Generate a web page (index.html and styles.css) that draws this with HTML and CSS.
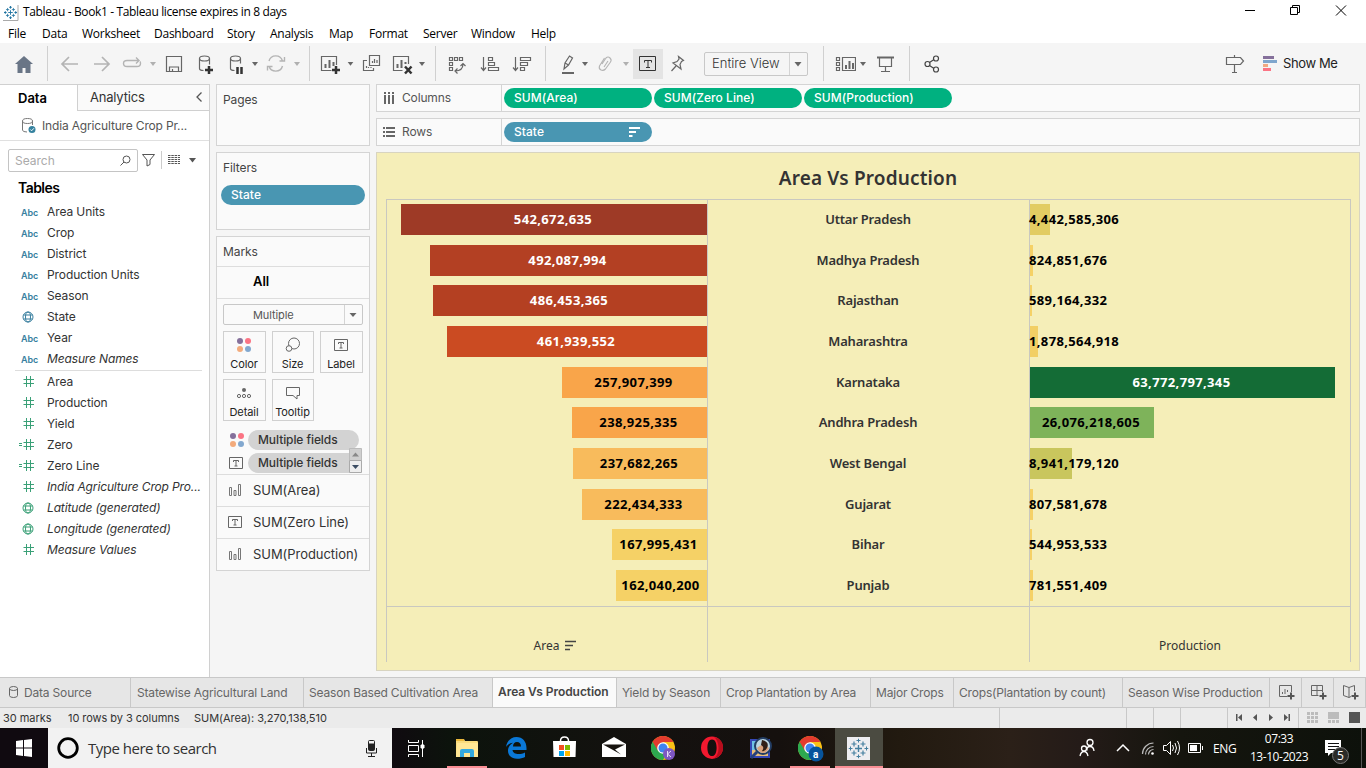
FILE: index.html
```html
<!DOCTYPE html>
<html lang="en">
<head>
<meta charset="utf-8">
<title>Tableau - Book1</title>
<link rel="stylesheet" href="styles.css">
</head>
<body>
<svg class="defs" width="0" height="0">
  <symbol id="caret" viewBox="0 0 14 41"><path d="M4 19h6l-3 4z"/></symbol>
  <symbol id="globe" viewBox="0 0 12 12"><g fill="none" stroke="currentColor"><circle cx="6" cy="6" r="5"/><ellipse cx="6" cy="6" rx="2.5" ry="5"/><path d="M1.6 4h8.8M1.6 8h8.8"/></g></symbol>
  <symbol id="hash" viewBox="0 0 15 11"><path d="M7.500 0v11M11.500 0v11M4.500 3.500H15M4.500 7.500H15" fill="none" stroke="currentColor"/></symbol>
  <symbol id="calc" viewBox="0 0 15 11"><path d="M7.500 0v11M11.500 0v11M4.500 3.500H15M4.500 7.500H15M0 4.500h3M0 6.500h3" fill="none" stroke="currentColor"/></symbol>
  <symbol id="dots" viewBox="0 0 16 16"><circle cx="4" cy="4" r="3" fill="#85709b"/><circle cx="12" cy="4" r="3" fill="#fb7484"/><circle cx="4" cy="12" r="3" fill="#f3ab7c"/><circle cx="12" cy="12" r="3" fill="#82a8cf"/></symbol>
  <symbol id="tbox" viewBox="0 0 14 12"><path d="M.5.5h13v11H.5zM4.500 5V3.500h5V5M7 3.500v5.500M5.500 9h3" fill="none" stroke="#666"/></symbol>
  <symbol id="bars" viewBox="0 0 14 12"><path d="M1.500 3.500h2v8h-2zM6 6.500h2v5H6zM10.500.5h2v11h-2z" fill="none" stroke="#777"/></symbol>
  <symbol id="chrome" viewBox="0 0 24 24"><circle cx="12" cy="12" r="12" fill="#fbc116"/><path d="M1.600 6A12 12 0 0 0 12 24l5.200-9L12 12 6.800 15z" fill="#2da94f"/><path d="M1.600 6 6.800 15 12 7z" fill="#2da94f"/><path d="M1.600 6A12 12 0 0 1 22.400 6H12L6.500 9z" fill="#e33b2e"/><path d="M1.600 6 6.800 15 12 6z" fill="#e33b2e"/><path d="M1.600 6A12 12 0 0 0 4 20.900L7 15z" fill="#2da94f"/><circle cx="12" cy="12" r="5.800" fill="#fff"/><circle cx="12" cy="12" r="4.500" fill="#3f83f0"/></symbol>
  <symbol id="tableau" viewBox="0 0 20 20"><g fill="none" stroke="currentColor"><path d="M10 6.500v7M6.500 10h7" stroke-width="1.400"/><path d="M10 0v4M8 2h4M10 16v4M8 18h4M0 10h4M2 8v4M16 10h4M18 8v4"/><path d="M5.500 3v5M3 5.500h5M14.500 3v5M12 5.500h5M5.500 12v5M3 14.500h5M14.500 12v5M12 14.500h5" stroke-width="1.200"/></g></symbol>
</svg>

<header class="titlebar">
  <svg class="app" width="16" height="19"><path d="M0 3h15v15H0z" fill="#fff"/><path d="M15 3v15.500H0" fill="none" stroke="#aaa"/><use href="#tableau" x="1" y="4" width="13" height="13" class="tabico"/></svg>
  <span class="caption">Tableau - Book1 - Tableau license expires in 8 days</span>
  <svg class="winctl" width="120" height="22" viewBox="1240 0 120 22" fill="none" stroke="#000"><path d="M1245 10.500h10M1290.500 7.500h7v7h-7zM1292.500 7.500v-2h7v7h-2M1336 5.500l10 10M1346 5.500l-10 10"/></svg>
</header>

<nav class="menu">
  <span style="width:34px">File</span><span style="width:40px">Data</span><span style="width:72px">Worksheet</span><span style="width:73px">Dashboard</span><span style="width:43px">Story</span><span style="width:59px">Analysis</span><span style="width:40px">Map</span><span style="width:54px">Format</span><span style="width:48px">Server</span><span style="width:60px">Window</span><span>Help</span>
</nav>

<div class="toolbar">
  <svg width="47" viewBox="0 43 47 41"><path d="M24 56l9 8h-2.500v9h-5v-5h-3v5h-5v-9H15z" fill="#697586"/></svg><i class="sep"></i>
  <svg width="38" viewBox="48 43 38 41" class="dim"><path d="M62 64h16M69 57l-7 7 7 7"/></svg>
  <svg width="30" viewBox="86 43 30 41" class="dim"><path d="M94 64h15M102 57l7 7-7 7"/></svg>
  <svg width="30" viewBox="116 43 30 41" class="dim round"><path d="M139 60.500h-12q-3.500 0-3.500 3t3.500 3h10q3.500 0 3.500-3 0-1.500-.5-2M136 57.500l3 3-3 3"/></svg>
  <svg width="14" class="caret dimc"><use href="#caret" width="14" height="41"/></svg>
  <svg width="28" viewBox="160 43 28 41" class="ln"><path d="M166.500 56.500h15v15h-15zM169.500 71v-4h9v4M172.500 71v-2"/></svg>
  <svg width="32" viewBox="188 43 32 41" class="ln"><ellipse cx="204.500" cy="58.500" rx="5" ry="2.500"/><path d="M199.500 58.500v10c0 1 1.500 2 4 2M209.500 58.500v6"/><path d="M209 66v8M205 70h8" class="bold"/></svg>
  <svg width="28" viewBox="220 43 28 41" class="ln"><ellipse cx="235.500" cy="58.500" rx="5" ry="2.500"/><path d="M230.500 58.500v10c0 1 1.500 2 4 2M240.500 58.500v5"/><path d="M237.500 67v7M241.500 67v7" class="bold"/></svg>
  <svg width="14" class="caret"><use href="#caret" width="14" height="41"/></svg>
  <svg width="28" viewBox="262 43 28 41" class="dim round"><path d="M269 61a7 7 0 0 1 13.500 0M282.500 66a7 7 0 0 1-13.500 0M279.500 61h5v-4M272.500 66.500h-5v4"/></svg>
  <svg width="14" class="caret dimc"><use href="#caret" width="14" height="41"/></svg><b class="gap5"></b><i class="sep"></i>
  <svg width="34" viewBox="310 43 34 41" class="ln"><path d="M336.500 65v-8.500h-15v14h10"/><path d="M325.500 68v-4M329.500 68v-8M333.500 66v-4" class="mid"/><path d="M336 66v8M332 70h8" class="bold"/></svg>
  <svg width="13" class="caret"><use href="#caret" width="13" height="41"/></svg>
  <svg width="31" viewBox="357 43 31 41" class="ln"><path d="M369.500 55.500h10v10h-10zM367 60.500h-3.500v10h10V68M372.500 63v-2M374.500 63v-4M377 63v-3M366.500 68v-2M368.500 68v-1M371 68v-1"/></svg>
  <svg width="27" viewBox="388 43 27 41" class="ln"><path d="M408.500 64v-7.500h-15v14h9"/><path d="M397.500 68v-4M401.500 68v-8M405.500 64v-2" class="mid"/><path d="M405 66.500l6.500 7M411.500 66.500l-6.500 7" class="bold"/></svg>
  <svg width="14" class="caret"><use href="#caret" width="14" height="41"/></svg><b class="gap6"></b><i class="sep"></i>
  <svg width="36" viewBox="436 43 36 41" class="ln"><path d="M449.500 57.500h3v3h-3zM454.500 57.500h3v3h-3zM459.500 57.500h3v3h-3zM449.500 62.500h3v3h-3zM449.500 67.500h3v3h-3zM455 71c5 0 8-2 8-7M460.500 66l2.500-2.500 2.500 2.500M457.500 68.500L455 71l2.500 2.500"/></svg>
  <svg width="33" viewBox="472 43 33 41" class="ln"><path d="M483.500 57v13M481 67.500l2.500 3 2.500-3M488.500 57.500h4v3h-4zM488.500 62.500h6v3h-6zM488.500 67.500h10v3h-10z"/></svg>
  <svg width="40" viewBox="505 43 40 41" class="ln"><path d="M515.500 57v13M513 67.500l2.500 3 2.500-3M520.500 57.500h10v3h-10zM520.500 62.500h7v3h-7zM520.500 67.500h4v3h-4z"/></svg><i class="sep"></i>
  <svg width="32" viewBox="546 43 32 41" class="ln"><path d="M564 69l1-6 4.500-7 3 2-4 7zM565 63l3.500 2"/><path d="M562 73h12" class="mid"/></svg>
  <svg width="14" class="caret"><use href="#caret" width="14" height="41"/></svg>
  <svg width="27" viewBox="592 43 27 41" class="dim thin"><path d="M602 64l4-6q2-2 4 0t.5 4l-5 7q-2 2-4.500 1t-1.500-4l5-8M604 67l4-6"/></svg>
  <svg width="14" class="caret dimc"><use href="#caret" width="14" height="41"/></svg>
  <svg width="30" viewBox="633 43 30 41"><path d="M633 49h30v30h-30z" fill="#e4e4e4"/><path d="M639.500 56.500h16v14h-16zM644.500 62.500v-2h7v2M648 60.500v7M646 67.500h4" fill="none" stroke="#333"/></svg>
  <svg width="41" viewBox="663 43 41 41" class="ln"><path d="M678.500 56.500l5 4-2 1-1.500 3 1 4.500-8-6 4-1.500 2-2.500zM676 66l-4.500 5"/></svg>
  <div class="viewbox"><span>Entire View</span><svg width="18" height="22"><path d="M.5 0v22" stroke="#d4d4d4"/><path d="M5.500 9h7L9 13.500z" fill="#666"/></svg></div>
  <b class="gap15"></b><i class="sep"></i>
  <svg width="32" viewBox="824 43 32 41" class="ln"><path d="M836.500 57.500h3v3h-3zM836.500 62.500h3v3h-3zM836.500 67.500h3v3h-3zM842.500 57.500h13v13h-13z"/><path d="M846 69v-4M849.500 69v-8M853 69v-6" class="mid"/></svg>
  <svg width="14" class="caret"><use href="#caret" width="14" height="41"/></svg>
  <svg width="39" viewBox="870 43 39 41" class="ln"><path d="M877 57.500h17" class="mid"/><path d="M879.500 58v8.500h12V58M885.500 67v4M881 71.500h9"/></svg><i class="sep"></i>
  <svg width="40" viewBox="910 43 40 41" class="ln dark"><circle cx="927.500" cy="64" r="2.500"/><circle cx="936" cy="58.500" r="2.500"/><circle cx="936" cy="69.500" r="2.500"/><path d="M929.500 62.500l4.500-3M929.500 65.500l4.500 3"/></svg>
  <b class="fill"></b>
  <svg width="52" viewBox="1210 43 52 41" class="ln"><path d="M1226.500 57.500h14l3 3.500-3 3.500h-14zM1234.500 55v2M1234.500 65v7.500M1232 72.500h5"/></svg>
  <svg width="16" viewBox="1262 43 16 41"><path d="M1263 56h11v3h-11z" fill="#85709b"/><path d="M1263 60h14v3h-14z" fill="#7fa6cd"/><path d="M1263 64h5v3h-5z" fill="#f0a982"/><path d="M1263 68h8v3h-8z" fill="#fb7484"/></svg>
  <span class="showme">Show Me</span>
</div>

<main class="work">
  <aside class="data">
    <div class="dtabs"><strong>Data</strong><span>Analytics</span><svg width="8" height="12"><path d="M6.500 1.500 2 6l4.500 4.500" fill="none" stroke="#555" stroke-width="1.300"/></svg></div>
    <div class="source"><svg width="15" height="16" fill="none" stroke="#777"><ellipse cx="5.500" cy="3" rx="5" ry="2.500"/><path d="M.5 3v9q0 2 4.500 2M10.500 3v4"/><circle cx="10" cy="11.500" r="3.500" fill="#35829f" stroke="none"/><path d="M8.300 11.500l1.300 1.300 2.300-2.500" stroke="#fff"/></svg><span>India Agriculture Crop Pr...</span></div>
    <div class="find">
      <div class="search"><span>Search</span><svg width="11" height="11" fill="none" stroke="#555"><circle cx="6.500" cy="4.500" r="3.500"/><path d="M4 7L.5 10.500"/></svg></div>
      <svg width="58" height="22" viewBox="139 149 58 22" fill="none" stroke="#555"><path d="M142.500 154.500h12l-4.500 5.500v4.500l-3 1.500v-6z"/><path d="M161.500 151v18" stroke="#ccc"/><path d="M168 155.500h12M168 157.500h12M168 159.500h12M168 161.500h12M168 163.500h12" stroke-dasharray="2.500 .8"/><path d="M189 158h7l-3.500 4.500z" fill="#555" stroke="none"/></svg>
    </div>
    <h3>Tables</h3>
    <ul class="fields dims">
      <li><b>Abc</b>Area Units</li><li><b>Abc</b>Crop</li><li><b>Abc</b>District</li><li><b>Abc</b>Production Units</li><li><b>Abc</b>Season</li>
      <li><svg class="g"><use href="#globe"/></svg>State</li><li><b>Abc</b>Year</li><li><b>Abc</b><em>Measure Names</em></li>
    </ul>
    <ul class="fields meas">
      <li><svg class="h"><use href="#hash"/></svg>Area</li>
      <li><svg class="h"><use href="#hash"/></svg>Production</li>
      <li><svg class="h"><use href="#hash"/></svg>Yield</li>
      <li><svg class="h"><use href="#calc"/></svg>Zero</li>
      <li><svg class="h"><use href="#calc"/></svg>Zero Line</li>
      <li><svg class="h"><use href="#hash"/></svg><em>India Agriculture Crop Pro...</em></li>
      <li><svg class="g"><use href="#globe"/></svg><em>Latitude (generated)</em></li>
      <li><svg class="g"><use href="#globe"/></svg><em>Longitude (generated)</em></li>
      <li><svg class="h"><use href="#hash"/></svg><em>Measure Values</em></li>
    </ul>
  </aside>

  <section class="cards">
    <div class="card pages"><h4>Pages</h4></div>
    <div class="card filters"><h4>Filters</h4><span class="pill blue">State</span></div>
    <div class="card marks">
      <h4>Marks</h4>
      <div class="all">All</div>
      <div class="combo"><span>Multiple</span><svg width="18" height="19"><path d="M.5 0v19" stroke="#d4d4d4"/><path d="M5.500 8h7L9 12z" fill="#666"/></svg></div>
      <div class="btns">
        <div><svg width="16" height="16"><use href="#dots"/></svg>Color</div>
        <div><svg width="16" height="16" fill="none" stroke="#666"><circle cx="9" cy="6.500" r="5.500"/><circle cx="4" cy="11.500" r="2.800" fill="#fafafa"/></svg>Size</div>
        <div><svg width="16" height="16"><use href="#tbox" x="1" y="2" width="14" height="12"/></svg>Label</div>
        <div><svg width="16" height="16" fill="none" stroke="#666"><circle cx="8" cy="5" r="2" fill="#666" stroke="none"/><circle cx="3" cy="11" r="1.600"/><circle cx="8" cy="11" r="1.600"/><circle cx="13" cy="11" r="1.600"/></svg>Detail</div>
        <div><svg width="16" height="16" fill="none" stroke="#666"><path d="M1.500 2.500h13v8H12v3.500l-4-3.500H1.500z"/></svg>Tooltip</div>
      </div>
      <div class="enc">
        <div><svg width="16" height="16"><use href="#dots"/></svg><span>Multiple fields</span></div>
        <div><svg width="16" height="16"><use href="#tbox" x="0" y="2" width="14" height="12"/></svg><span>Multiple fields</span></div>
        <svg class="scroll" width="13" height="25"><path d="M.5.5h12v12H.5z" fill="#cfcfcf" stroke="#bbb"/><path d="M.5 12.500h12v12H.5z" fill="#eee" stroke="#aaa"/><path d="M3 8.500h7l-3.500-4z" fill="#888"/><path d="M3 17h7l-3.500 4z" fill="#3c4d63"/></svg>
      </div>
      <div class="mrow"><svg width="14" height="12"><use href="#bars"/></svg>SUM(Area)</div>
      <div class="mrow"><svg width="14" height="12"><use href="#tbox"/></svg>SUM(Zero Line)</div>
      <div class="mrow"><svg width="14" height="12"><use href="#bars"/></svg>SUM(Production)</div>
    </div>
  </section>

  <section class="canvas">
    <div class="shelf"><div class="name"><svg width="12" height="12" stroke="#666" stroke-width="2"><path d="M2 3v9M6 3v9M10 3v9M2 0v2M6 0v2M10 0v2"/></svg>Columns</div><span class="pill green">SUM(Area)</span><span class="pill green">SUM(Zero Line)</span><span class="pill green">SUM(Production)</span></div>
    <div class="shelf"><div class="name"><svg width="12" height="12" stroke="#666" stroke-width="2"><path d="M0 2h2M0 6h2M0 10h2M3 2h9M3 6h9M3 10h9"/></svg>Rows</div><span class="pill blue">State<svg width="11" height="10" stroke="#fff" stroke-width="2"><path d="M0 1h11M0 5h7M0 9h3.500"/></svg></span></div>
    <div class="sheet">
      <h1>Area Vs Production</h1>
      <div class="plot">
        <div class="col area">
          <div class="bar w" style="width:306px;background:#9e3a26"><span>542,672,635</span></div>
          <div class="bar w" style="width:277px;background:#b34023"><span>492,087,994</span></div>
          <div class="bar w" style="width:274px;background:#b44022"><span>486,453,365</span></div>
          <div class="bar w" style="width:260px;background:#cb4b22"><span>461,939,552</span></div>
          <div class="bar" style="width:145px;background:#f9a54a"><span>257,907,399</span></div>
          <div class="bar" style="width:135px;background:#f9a54a"><span>238,925,335</span></div>
          <div class="bar" style="width:134px;background:#f8bb5c"><span>237,682,265</span></div>
          <div class="bar" style="width:125px;background:#f8bb5c"><span>222,434,333</span></div>
          <div class="bar" style="width:95px;background:#f5d166"><span>167,995,431</span></div>
          <div class="bar" style="width:91px;background:#f5d166"><span>162,040,200</span></div>
        </div>
        <div class="col state">
          <div>Uttar Pradesh</div><div>Madhya Pradesh</div><div>Rajasthan</div><div>Maharashtra</div><div>Karnataka</div><div>Andhra Pradesh</div><div>West Bengal</div><div>Gujarat</div><div>Bihar</div><div>Punjab</div>
        </div>
        <div class="col prod">
          <div class="bar s" style="width:20px;background:#e2cc62"><span>4,442,585,306</span></div>
          <div class="bar s" style="width:3px;background:#f5d166"><span>824,851,676</span></div>
          <div class="bar s" style="width:2px;background:#f5d166"><span>589,164,332</span></div>
          <div class="bar s" style="width:8px;background:#f2cf64"><span>1,878,564,918</span></div>
          <div class="bar w" style="width:305px;background:#146c36"><span>63,772,797,345</span></div>
          <div class="bar" style="width:124px;background:#7eb35a"><span>26,076,218,605</span></div>
          <div class="bar s" style="width:42px;background:#c9c65d"><span>8,941,179,120</span></div>
          <div class="bar s" style="width:3px;background:#f5d166"><span>807,581,678</span></div>
          <div class="bar s" style="width:2px;background:#f5d166"><span>544,953,533</span></div>
          <div class="bar s" style="width:3px;background:#f5d166"><span>781,551,409</span></div>
        </div>
        <div class="axis first">Area<svg width="11" height="11" stroke="#444" stroke-width="1.500"><path d="M0 1.500h11M0 5.500h8M0 9.500h5"/></svg></div>
        <div class="axis"></div>
        <div class="axis">Production</div>
      </div>
    </div>
  </section>
</main>

<footer class="tabs">
  <span class="ds" style="width:131px"><svg width="9" height="14" fill="none" stroke="#666"><ellipse cx="4.500" cy="2.500" rx="4" ry="2"/><path d="M.5 2.500v7q0 2 4 2t4-2v-7"/></svg>Data Source</span>
  <span style="width:173px;padding-left:6px">Statewise Agricultural Land</span>
  <span style="width:189px">Season Based Cultivation Area</span>
  <span class="on" style="width:124px">Area Vs Production</span>
  <span style="width:104px">Yield by Season</span>
  <span style="width:150px">Crop Plantation by Area</span>
  <span style="width:83px">Major Crops</span>
  <span style="width:169px">Crops(Plantation by count)</span>
  <span style="width:147px">Season Wise Production</span>
  <span class="new"><svg width="16" height="15"><path d="M12.500 7V.5H.5v11h8M3.500 9V7M6 9V4M8.500 7V5"/><path d="M12 7.500v7M8.500 11h7" class="plus"/></svg></span>
  <span class="new"><svg width="16" height="15"><path d="M11.500 7V.5H.5v10h7M6 .5v10M.5 5.500h11"/><path d="M12 7.500v7M8.500 11h7" class="plus"/></svg></span>
  <span class="new"><svg width="16" height="15"><path d="M6 2.500v10L.5 10.500v-10L6 2.500 11.500.5V6M6 12.500l2-1"/><path d="M12 7.500v7M8.500 11h7" class="plus"/></svg></span>
</footer>

<div class="status">
  <span style="width:65px">30 marks</span><span style="width:126px">10 rows by 3 columns</span><span>SUM(Area): 3,270,138,510</span>
  <svg width="368" height="20" viewBox="998 708 368 20"><path d="M999.500 708v20M1126.500 708v20M1153.500 708v20M1180.500 708v20M1227.500 708v20M1298.500 708v20" stroke="#c8c8c8"/><g fill="#555"><path d="M1236 714h1.500v7h-1.500zM1242 714v7l-4-3.500zM1257 714v7l-4-3.500zM1269 714v7l4-3.500zM1284 714v7l4-3.500zM1288.500 714h1.500v7h-1.500z"/><path d="M1349 712h11v11h-11z"/></g><g fill="#bcbcbc"><path d="M1307 712h3v3h-3zM1311 712h3v3h-3zM1315 712h3v3h-3zM1307 716h3v3h-3zM1311 716h3v3h-3zM1315 716h3v3h-3zM1307 720h3v3h-3zM1311 720h3v3h-3zM1315 720h3v3h-3zM1328 712h11v7h-11zM1328 720h3v3h-3zM1332 720h3v3h-3zM1336 720h3v3h-3z"/></g></svg>
</div>

<div class="taskbar">
  <svg width="48" height="40" viewBox="0 728 48 40" fill="#fff"><path d="M16 741l7-1v7.500h-7zM24 740l8-1v8.500h-8zM16 748.500h7v7.500l-7-1zM24 748.500h8v8.500l-8-1z"/></svg>
  <div class="ask"><svg width="40" height="40"><circle cx="20" cy="20" r="9.300" fill="none" stroke="#000" stroke-width="2.800"/></svg><span>Type here to search</span><svg width="40" height="40" viewBox="352 728 40 40" fill="none" stroke="#222"><rect x="368.500" y="740.500" width="6" height="10" rx="1"/><path d="M369 744h5v6h-5z" fill="#222"/><path d="M366.500 748v5h10v-5M371.500 753v4M368 756.500h7"/></svg></div>
  <svg width="48" height="40" viewBox="392 728 48 40" fill="none" stroke="#fff"><path d="M408.500 740v2.500h10V740M408.500 745.500h10v6h-10zM408.500 757v-2.500h10v2.500M422.500 740v17"/><path d="M421 745h3v3h-3z" fill="#fff"/></svg>
  <svg width="54" height="40" viewBox="440 728 54 40"><path d="M456 740q0-1 1-1h7l1 2h12q1 0 1 1v15h-22z" fill="#f9dc7d"/><path d="M456 739h8v2h-8z" fill="#eab83b"/><path d="M457 743h21v14h-22z" fill="#ffe795"/><path d="M460 757v-6q0-2 2-2h10q2 0 2 2v6h-4v-4h-6v4z" fill="#32a9e0"/><path d="M447 766h40v2h-40z" fill="#f98e94"/></svg>
  <svg width="46" height="40" viewBox="494 728 46 40"><path fill-rule="evenodd" d="M506 747c1-6 5-10 10.500-10 6 0 10 4.500 10 11v2h-14c.5 3 3 4 6 4 2.500 0 4.500-.5 6.500-1.500v4.500c-2 1-5 1.800-8 1.800-6 0-9-3.800-9-8 0-3.500 2-6.500 5-8-2.500 0-5 1.500-7 4.200zm7-.5h8c0-3-1.500-4.500-4-4.500s-4 2-4 4.500z" fill="#0a78d7"/></svg>
  <svg width="50" height="40" viewBox="540 728 50 40"><path d="M560.500 742v-1q0-4 4-4t4 4v1" fill="none" stroke="#fff" stroke-width="1.500"/><path d="M553 741h23l-.5 16h-22z" fill="#fff"/><path d="M559 745h5v5h-5z" fill="#f25022"/><path d="M565 745h5v5h-5z" fill="#7fba00"/><path d="M559 751h5v5h-5z" fill="#00a4ef"/><path d="M565 751h5v5h-5z" fill="#ffb900"/></svg>
  <svg width="50" height="40" viewBox="590 728 50 40"><path d="M602 744l12-7 12 7v13h-24z" fill="#fff"/><path d="M603 744.500h22l-10 5 6 5-8-4.500z" fill="#17130f"/></svg>
  <svg width="48" height="40" viewBox="640 728 48 40"><use href="#chrome" x="651" y="736" width="24" height="24"/><circle cx="669" cy="754" r="6" fill="#7e57c2"/><path d="M667.500 751v6M671 751l-3.500 3 3.500 3" fill="none" stroke="#e6dcf7"/></svg>
  <svg width="50" height="40" viewBox="688 728 50 40"><path fill-rule="evenodd" d="M712 736.500a11 11.200 0 1 0 0 22.400 11 11.200 0 1 0 0-22.400zm0 3c3 0 4.600 3.500 4.600 8.200s-1.600 8.300-4.600 8.300-4.600-3.500-4.600-8.300 1.600-8.200 4.600-8.200z" fill="#f2192f"/><path d="M714 737c12 2 12 19 0 21.500 6-4 6-17 0-21.500z" fill="#b70d1c"/></svg>
  <svg width="48" height="40" viewBox="738 728 48 40"><path d="M750 739h20v19h-20z" fill="#3647b5"/><path d="M752 741h16v10h-16z" fill="#6fc1e5"/><path d="M752 750h16v6h-16z" fill="#e9be77"/><circle cx="763" cy="746" r="8" fill="#bad4e0" stroke="#223c62" stroke-width="2"/><path d="M757 748q6-6 12 0-2 5-6 5t-6-5z" fill="#d9a27c"/><path d="M762 740q8 2 5 8-2 4-5 3 3-4-1-6z" fill="#302017"/><path d="M757 752l-6 6" stroke="#27417a" stroke-width="3"/></svg>
  <svg width="49" height="40" viewBox="786 728 49 40"><use href="#chrome" x="798" y="736" width="24" height="24"/><circle cx="816" cy="754" r="7.500" fill="#07549c"/><path d="M790 766h40v2h-40z" fill="#f98e94"/><text x="813" y="757.500" fill="#fff" font-size="10" font-family="Roboto" font-weight="700">a</text></svg>
  <svg width="48" height="40" viewBox="835 728 48 40"><path d="M835 728h48v40h-48z" fill="#4b4b41"/><path d="M847 737h23v23h-23z" fill="#ededf0"/><use href="#tableau" x="848.500" y="738.500" width="20" height="20" color="#447f9f"/><path d="M835 766h48v2h-48z" fill="#f98e94"/></svg>
  <b class="fill"></b>
  <svg width="134" height="40" viewBox="1072 728 134 40" fill="none" stroke="#fff"><g stroke-width="1.300"><circle cx="1090" cy="742.500" r="3"/><path d="M1087 750.500q-.5-4 3-4t4 4.500"/><circle cx="1084" cy="748.500" r="2.500"/><path d="M1080 756q1-4.500 4-4.500t4 4.500"/></g><path d="M1117 751l6-6 6 6" stroke-width="1.500"/><path d="M1142.500 754a11 11 0 0 1 11-11M1145.500 754.500a8 8 0 0 1 8-8M1148.500 754.500a5 5 0 0 1 5-5" stroke="#bbb" stroke-width="1.200"/><circle cx="1152.500" cy="753.500" r="1.300" fill="#fff" stroke="none"/><path d="M1163.500 745.500h3l4-4v13l-4-4h-3zM1172.500 745q2 3 0 6M1175 743q3 5 0 10M1177.500 741q4 7 0 14M1188.500 743.500h12v9h-12zM1202.500 746v4"/><path d="M1190 745h7v6h-7z" fill="#fff" stroke="none"/></svg>
  <span class="lang">ENG</span>
  <span class="clock">07:33<br>13-10-2023</span>
  <svg width="48" height="40" viewBox="1318 728 48 40"><path d="M1325 740h16v13h-10l-3 3v-3h-3z" fill="#fff"/><path d="M1328 743.500h11M1328 746.500h11M1328 749.500h8" stroke="#111"/><circle cx="1340.500" cy="755.500" r="8" fill="#2b2b28" stroke="#777"/><text x="1340.500" y="760" text-anchor="middle" fill="#fff" font-size="12" font-family="Open Sans">5</text><path d="M1361.500 728v40" stroke="#555"/></svg>
</div>
</body>
</html>
```

FILE: styles.css
```css
* { box-sizing: border-box; }
body { margin: 0; width: 1366px; height: 768px; overflow: hidden; display: flex; flex-direction: column; background: #f5f5f5; font: 12px Inter, "Noto Sans", sans-serif; color: #333; }
svg { display: block; flex: none; }
h1, h3, h4, ul { margin: 0; padding: 0; }
.defs { display: none; }
.fill { flex: 1; }

.titlebar { height: 22px; background: #fff; display: flex; align-items: center; padding-left: 3px; font: 12px "Open Sans", sans-serif; color: #000; }
.tabico { color: #1d719f; stroke-width: 1.5; }
.caption { margin-left: 4px; flex: 1; letter-spacing: -.36px; white-space: nowrap; }
.winctl { margin-right: 6px; }
.menu { height: 21px; background: #fff; display: flex; align-items: center; padding: 2px 0 0 8px; font: 12px/18px "Open Sans", sans-serif; color: #000; letter-spacing: -.25px; }

.toolbar { height: 41px; display: flex; align-items: center; }
.toolbar > svg { height: 41px; }
.sep { width: 1px; height: 35px; background: #d0d0d0; flex: none; }
.dim, .ln { fill: none; stroke: #666; stroke-width: 1.2; }
.dim { stroke: #b4b4b4; stroke-width: 1.7; }
.dark { stroke: #444; }
.round { stroke-width: 1.4; }
.thin { stroke-width: 1.1; }
.mid { stroke-width: 2; }
.bold { stroke: #333; stroke-width: 2.5; }
.caret { fill: #666; }
.dimc { fill: #b0b0b0; }
.gap5 { width: 5px; } .gap6 { width: 6px; } .gap15 { width: 15px; }
.viewbox { width: 104px; height: 24px; border: 1px solid #c8c8c8; border-radius: 2px; display: flex; align-items: center; justify-content: space-between; padding-left: 7px; font-size: 13px; font-weight: 300; }
.viewbox span { padding-bottom: 1px; }
.showme { width: 88px; padding: 0 0 1px 5px; font-size: 13px; letter-spacing: -.4px; color: #222; }

.work { height: 593px; display: flex; }
.data { width: 210px; background: #fff; border-right: 1px solid #d0d0d0; border-top: 1px solid #d0d0d0; }
.dtabs { height: 26px; display: flex; align-items: center; }
.dtabs strong { width: 77px; padding-left: 18px; font-size: 13px; color: #000; font-weight: 600; }
.dtabs span { flex: 1; height: 26px; line-height: 25px; padding-left: 12px; background: #fafafa; border-left: 1px solid #d0d0d0; border-bottom: 1px solid #d0d0d0; font-size: 13px; letter-spacing: -.2px; }
.dtabs svg { width: 14px; height: 26px; padding: 6px 6px 0 0; background: #fafafa; border-bottom: 1px solid #d0d0d0; }
.source { height: 30px; padding-left: 22px; display: flex; align-items: center; gap: 5px; border-bottom: 1px solid #e0e0e0; color: #555; letter-spacing: -.16px; }
.source span { padding-bottom: 1px; }
.find { display: flex; padding: 8px 0 0 8px; gap: 2px; }
.search { width: 130px; height: 23px; border: 1px solid #c4c4c4; border-radius: 2px; display: flex; align-items: center; justify-content: space-between; padding: 0 6px; color: #aaa; margin-right: -1px; }
.data h3 { font-size: 14px; font-weight: 600; color: #000; line-height: 17px; padding: 7px 0 0 18px; letter-spacing: -.55px; }
.fields { list-style: none; color: #333; }
.fields li { height: 21px; display: flex; align-items: center; white-space: nowrap; letter-spacing: -.1px; }
.fields b { width: 26px; margin-left: 21px; padding-top: 2px; font-size: 9px; font-weight: 600; color: #397f9f; flex: none; }
.dims { padding-top: 5px; height: 175px; margin-right: 7px; margin-left: 15px; border-bottom: 1px solid #ddd; }
.dims li { margin-left: -15px; }
.g { width: 12px; height: 12px; margin: 0 13px 0 22px; color: #397f9f; }
.meas .g, .h { color: #3aa077; }
.h { width: 15px; height: 11px; margin: 0 13px 0 19px; }
em { font-style: italic; letter-spacing: -.14px; }

.cards { width: 154px; margin-left: 6px; display: flex; flex-direction: column; gap: 6px; }
.card { background: #fafafa; border: 1px solid #d4d4d4; }
.card h4 { font-size: 12px; font-weight: 400; line-height: 16px; padding: 7px 0 0 6px; color: #444; letter-spacing: -.1px; }
.pages { height: 62px; } .filters { height: 78px; } .marks { height: 335px; }
.pill { display: flex; align-items: center; justify-content: space-between; height: 20px; border-radius: 10px; padding: 0 12px 1px 10px; color: #fff; font-weight: 500; letter-spacing: .05px; }
.blue { background: #4996b2; } .green { background: #00b180; }
.filters .pill { margin: 9px 4px 0; }
.marks h4 { height: 30px; border-bottom: 1px solid #ddd; }
.all { height: 32px; line-height: 29px; border-bottom: 1px solid #ddd; padding-left: 36px; font-size: 13px; font-weight: 600; color: #000; }
.combo { width: 140px; height: 21px; margin: 5px 0 0 6px; border: 1px solid #c8c8c8; border-radius: 2px; display: flex; align-items: center; justify-content: space-between; padding-left: 29px; font-size: 11px; color: #555; letter-spacing: -.1px; }
.btns { display: grid; grid-template-columns: 43px 42px 43px; gap: 6px; padding: 6px 0 0 6px; }
.btns div { height: 42px; border: 1px solid #d0d0d0; display: flex; flex-direction: column; align-items: center; padding-top: 5px; gap: 3px; font-size: 11px; line-height: 17px; letter-spacing: -.1px; color: #222; padding-right: 1px; }
.enc { position: relative; height: 54px; padding: 9px 0 0 12px; display: flex; flex-direction: column; gap: 3px; border-bottom: 1px solid #ddd; }
.enc div { display: flex; align-items: center; gap: 3px; }
.enc span { width: 111px; height: 20px; line-height: 19px; border-radius: 10px; background: #d3d3d3; padding-left: 10px; color: #333; font-weight: 500; letter-spacing: -.08px; }
.scroll { position: absolute; left: 132px; top: 27px; }
.mrow { height: 32px; display: flex; align-items: center; gap: 11px; padding: 0 0 1px 11px; border-bottom: 1px solid #ddd; font-size: 13px; letter-spacing: -.05px; }
.mrow:last-child { border: 0; padding-bottom: 3px; }

.canvas { width: 984px; margin-left: 6px; display: flex; flex-direction: column; gap: 6px; }
.shelf { height: 28px; background: #fafafa; border: 1px solid #d4d4d4; display: flex; align-items: center; gap: 2px; }
.name { width: 125px; height: 26px; display: flex; align-items: center; gap: 7px; padding: 0 0 1px 6px; border-right: 1px solid #d4d4d4; color: #555; letter-spacing: -.15px; }
.shelf .pill { width: 148px; }
.sheet { height: 519px; background: #f5eeb8; border: 1px solid #d8d4c0; padding: 0 9px; }
.sheet h1 { height: 46px; text-align: center; font: 600 19px/50px "Noto Sans", sans-serif; letter-spacing: .15px; color: #333; }
.plot { display: grid; grid-template-columns: 321px 322px 321px; grid-template-rows: 407px 55px; border: 1px solid #c9c8c0; border-bottom: 0; width: 965px; font: 600 13px "Noto Sans", sans-serif; }
.col { display: flex; flex-direction: column; border-bottom: 1px solid #c9c8c0; margin-top: -.7px; justify-content: space-around; }
.area { align-items: flex-end; }
.area, .state, .axis:not(:last-child) { border-right: 1px solid #c9c8c0; }
.prod { align-items: flex-start; }
.bar { height: 31px; display: flex; align-items: center; justify-content: center; color: #000; white-space: nowrap; font-weight: 700; letter-spacing: .36px; padding: 0 2px 1px 0; }
.bar.w { color: #fff; }
.bar.s { justify-content: flex-start; padding-right: 0; }
.s span { margin-left: -1px; }
.state div { height: 31px; display: flex; align-items: center; justify-content: center; letter-spacing: -.2px; padding: 0 1px 1px 0; }
.axis { display: flex; align-items: center; justify-content: center; gap: 6px; padding: 21px 1px 0 0; font-size: 12px; font-weight: 400; }
.first { padding-left: 17px; }

.tabs { height: 31px; border-top: 1px solid #c8c8c8; border-bottom: 1px solid #c8c8c8; background: #e6e6e6; display: flex; }
.tabs span { border-right: 1px solid #c8c8c8; padding-left: 5px; display: flex; align-items: center; white-space: nowrap; color: #666; flex: none; letter-spacing: -.18px; }
.tabs .ds { padding-left: 9px; gap: 6px; }
.tabs .on { background: #fafafa; color: #444; font-weight: 600; padding-bottom: 2px; letter-spacing: -.05px; }
.tabs .new { width: 32px; padding-left: 9px; }
.new svg { fill: none; stroke: #666; }
.new .plus { stroke: #555; stroke-width: 2; }
.status { height: 20px; background: #ebebeb; display: flex; align-items: center; padding-left: 3px; font-size: 11px; white-space: nowrap; letter-spacing: -.05px; }
.status svg { margin-left: auto; }
.taskbar { height: 40px; display: flex; align-items: center; background: linear-gradient(90deg, #100a10 0 390px, #0c130c 450px, #14110f 650px, #15100e 780px, #221a10 900px, #2b2018 1010px, #241b18 1080px, #15150e 1180px, #0d110b); color: #fff; font-family: "Open Sans", sans-serif; }
.ask { width: 344px; height: 40px; background: #f2f2f2; display: flex; align-items: center; color: #333; font-size: 15px; }
.ask span { flex: 1; letter-spacing: -.5px; }
.lang { width: 38px; padding-left: 7px; letter-spacing: -.4px; }
.clock { width: 70px; margin-right: 4px; text-align: center; line-height: 18px; letter-spacing: -.45px; }
```
